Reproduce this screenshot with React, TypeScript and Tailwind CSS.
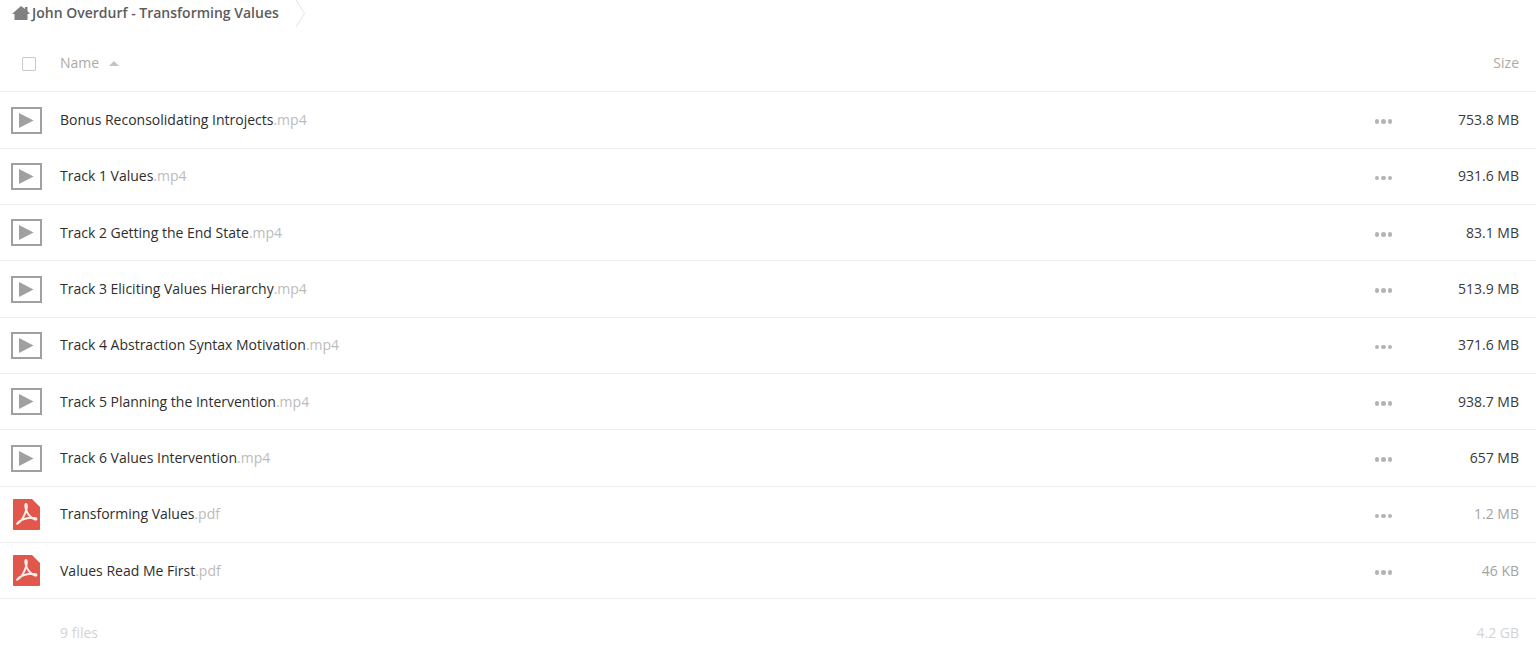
const rows: [string, string, string, boolean][] = [
  ["Bonus Reconsolidating Introjects", ".mp4", "753.8 MB", true],
  ["Track 1 Values", ".mp4", "931.6 MB", true],
  ["Track 2 Getting the End State", ".mp4", "83.1 MB", true],
  ["Track 3 Eliciting Values Hierarchy", ".mp4", "513.9 MB", true],
  ["Track 4 Abstraction Syntax Motivation", ".mp4", "371.6 MB", true],
  ["Track 5 Planning the Intervention", ".mp4", "938.7 MB", true],
  ["Track 6 Values Intervention", ".mp4", "657 MB", true],
  ["Transforming Values", ".pdf", "1.2 MB", false],
  ["Values Read Me First", ".pdf", "46 KB", false],
];

function VideoIcon() {
  return (
    <svg width="31" height="27" viewBox="0 0 31 27" className="block">
      <rect x="1" y="1" width="29" height="25" fill="none" stroke="#a0a0a0" strokeWidth="2" />
      <path d="M8 6 L22.5 13.5 L8 21 Z" fill="#a0a0a0" />
    </svg>
  );
}

function PdfIcon() {
  return (
    <svg width="27" height="31" viewBox="0 0 27 31" className="block">
      <path d="M0 1 Q0 0 1 0 H19 L27 8 V30 Q27 31 26 31 H1 Q0 31 0 30 Z" fill="#e2574c" />
      <path
        d="M4.5 24.5 C8 23 11.5 17 13.5 10 C14 7 13.8 5 13 5 C12 5 12.2 8.5 13.2 11 C15 16 18 19 22 20.5 C24 21 24 19 22 19 C17 18.5 10 20 6 22.5 C4 24 3.8 25.5 4.5 24.5 Z"
        fill="none"
        stroke="#fbeeed"
        strokeWidth="2"
      />
    </svg>
  );
}

export default function App() {
  return (
    <div className="w-[1536px] h-[650px] overflow-hidden bg-white font-['Open_Sans',sans-serif] text-[14px]">
      <div className="h-[35px] flex items-start">
        <div className="flex items-center h-[25px] pl-[12px]">
          <svg width="18" height="14" viewBox="0 0 18 14" className="block">
            <path d="M9 0 L13 3 V1 H15.5 V5 L18 8 H15.5 V14 H2.5 V8 H0 Z" fill="#808080" />
          </svg>
          <span className="ml-[2px] text-[#5c5c5c] font-semibold">John Overdurf - Transforming Values</span>
        </div>
        <svg width="12" height="27" viewBox="0 0 12 27" className="ml-[16px] block">
          <path d="M1 0 L9.5 13.5 L1 27" fill="none" stroke="#e2e2e2" />
        </svg>
      </div>
      <div className="h-[57.4px] flex items-center pb-[2px] border-b border-[#ededed] text-[#aeaaa2]">
        <div className="w-[60px] flex justify-center pr-[2px]">
          <div className="w-[14px] h-[14px] border border-[#c8c8c8] rounded-[1px] mt-[3px]" />
        </div>
        <span>Name</span>
        <svg width="10" height="5" viewBox="0 0 10 5" className="ml-[10px] mt-[3px]">
          <path d="M5 0 L10 5 H0 Z" fill="#c4c4c4" />
        </svg>
        <span className="ml-auto pr-[17px]">Size</span>
      </div>
      {rows.map(([name, ext, size, video]) => (
        <div key={name} className="h-[56.35px] flex items-center border-b border-[#ededed] text-[#2e2e2e]">
          <div className="w-[60px] flex justify-center pr-[7px]">{video ? <VideoIcon /> : <PdfIcon />}</div>
          <span className="mb-[1.5px]">
            {name}
            <span className="text-[#bcbcbc]">{ext}</span>
          </span>
          <div className="ml-auto flex items-center gap-[2px] mr-[16px] mt-[3px]">
            <span className="w-[4.5px] h-[4.5px] rounded-full bg-[#b4b4b4]" />
            <span className="w-[4.5px] h-[4.5px] rounded-full bg-[#b4b4b4]" />
            <span className="w-[4.5px] h-[4.5px] rounded-full bg-[#b4b4b4]" />
          </div>
          <span className={`w-[128px] text-right pr-[17px] mb-[1.5px] ${video ? "text-[#3a3a3a]" : "text-[#a3a3a3]"}`}>{size}</span>
        </div>
      ))}
      <div className="h-[67px] flex items-center pl-[60px] text-[#d3d3d3]">
        <span>9 files</span>
        <span className="ml-auto pr-[17px]">4.2 GB</span>
      </div>
    </div>
  );
}
